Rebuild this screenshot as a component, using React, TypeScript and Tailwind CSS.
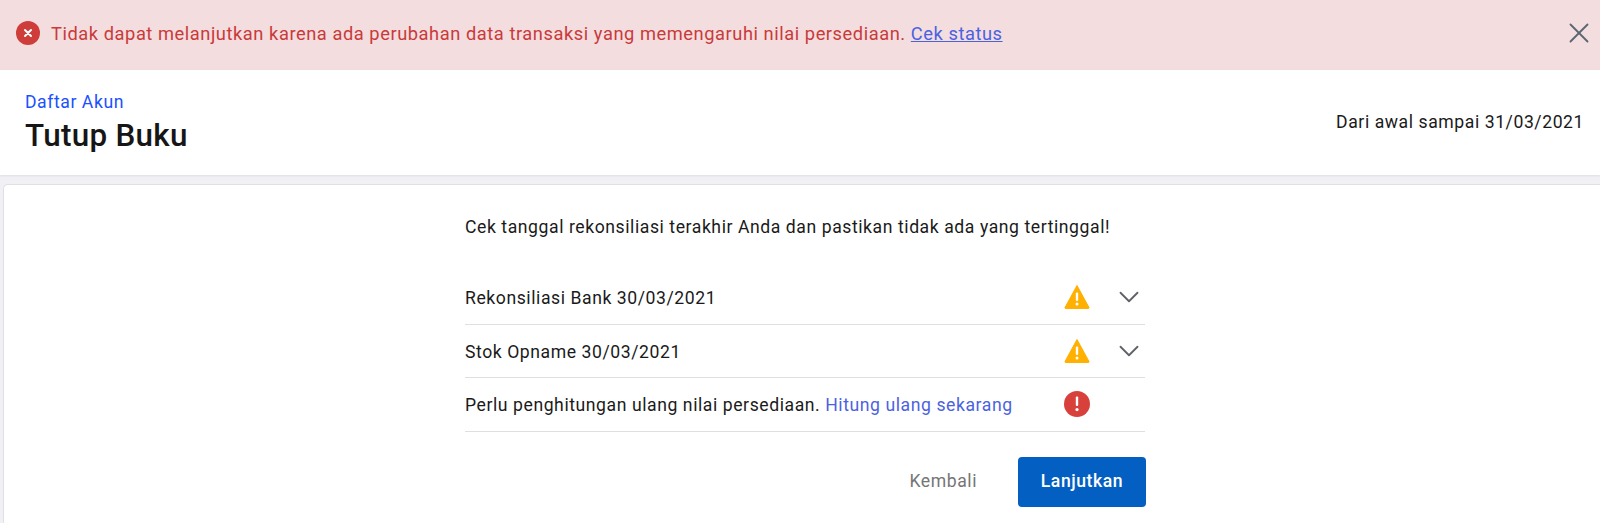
import React from 'react';
import { ChevronDown, X } from 'lucide-react';

const WarningIcon = () => (
  <svg width="26" height="26" viewBox="0 0 26 26">
    <path d="M13 1.5 L25 23.5 Q25.3 24.5 24 24.5 L2 24.5 Q0.7 24.5 1 23.5 Z" fill="#ffb000" stroke="#ffb000" strokeLinejoin="round" />
    <rect x="11.8" y="8.5" width="2.4" height="8.5" rx="1" fill="#fff" />
    <circle cx="13" cy="20" r="1.5" fill="#fff" />
  </svg>
);

const ErrorIcon = () => (
  <svg width="26" height="26" viewBox="0 0 26 26">
    <circle cx="13" cy="13" r="13" fill="#d8413b" />
    <rect x="11.8" y="5.5" width="2.4" height="9.5" rx="1" fill="#fff" />
    <circle cx="13" cy="18.6" r="1.6" fill="#fff" />
  </svg>
);

const CheckRow = ({ children, icon, expandable }: { children: React.ReactNode; icon: React.ReactNode; expandable?: boolean }) => (
  <div className="flex h-[53.5px] items-center border-b border-[#dfdfe2]">
    <div className="flex-1 pt-[2px]">{children}</div>
    <div className="flex w-[26px] justify-center">{icon}</div>
    <div className="-mr-[2px] ml-[21px] flex w-[36px] items-center justify-center">
      {expandable && <ChevronDown size={34} strokeWidth={1.3} className="text-[#5f6368]" />}
    </div>
  </div>
);

export default function App() {
  return (
    <div className="flex h-[523px] flex-col overflow-hidden bg-[#f1f1f5] font-['Roboto',sans-serif] text-[17.6px] tracking-[0.57px] text-[#1a1a1a]">
      {/* Banner */}
      <div className="flex h-[70px] shrink-0 items-center bg-[#f3dddf] pl-[16px] pr-[16px] text-[#c93a3a]">
        <svg width="24" height="24" viewBox="0 0 24 24" className="mr-[11px] -mt-[4px] shrink-0">
          <circle cx="12" cy="12" r="12" fill="#cf3d3a" />
          <path d="M9 9 L15 15 M15 9 L9 15" stroke="#fff" strokeWidth="2" strokeLinecap="round" />
        </svg>
        <span className="-mt-[3px] text-[18.3px] tracking-[0.55px]">
          Tidak dapat melanjutkan karena ada perubahan data transaksi yang memengaruhi nilai persediaan.{' '}
          <a className="text-[#4a62e0] underline">Cek status</a>
        </span>
        <X size={34} strokeWidth={1.3} className="-mr-[12px] -mt-[4px] ml-auto text-[#5b6570]" />
      </div>

      {/* Header */}
      <div className="flex h-[105px] shrink-0 items-center justify-between bg-white pl-[25px] pr-[16px] shadow-[0_1px_2px_rgba(0,0,0,0.08)]">
        <div>
          <div className="leading-[20px] text-[#1a50ff]">Daftar Akun</div>
          <h1 className="mt-[6px] text-[31.4px] font-medium leading-[36px] tracking-[0.3px] text-[#161616]">Tutup Buku</h1>
        </div>
        <div>Dari awal sampai 31/03/2021</div>
      </div>

      {/* Card */}
      <div className="ml-[3px] mt-[9px] flex-1 rounded-tl-[5px] border-l border-t border-[#dfe0e4] bg-white">
        <div className="ml-[461px] w-[680px] pt-[30px]">
          <p className="leading-[24px]">Cek tanggal rekonsiliasi terakhir Anda dan pastikan tidak ada yang tertinggal!</p>
          <div className="mt-[32px]">
            <CheckRow icon={<WarningIcon />} expandable>Rekonsiliasi Bank 30/03/2021</CheckRow>
            <CheckRow icon={<WarningIcon />} expandable>Stok Opname 30/03/2021</CheckRow>
            <CheckRow icon={<ErrorIcon />}>
              Perlu penghitungan ulang nilai persediaan. <a className="text-[#4a62e0]">Hitung ulang sekarang</a>
            </CheckRow>
          </div>
          <div className="-mr-[1px] mt-[25px] flex items-center justify-end">
            <button className="text-[#757575]">Kembali</button>
            <button className="ml-[41px] h-[50px] w-[128px] rounded-[4px] bg-[#035fc1] font-medium text-white">Lanjutkan</button>
          </div>
        </div>
      </div>
    </div>
  );
}
